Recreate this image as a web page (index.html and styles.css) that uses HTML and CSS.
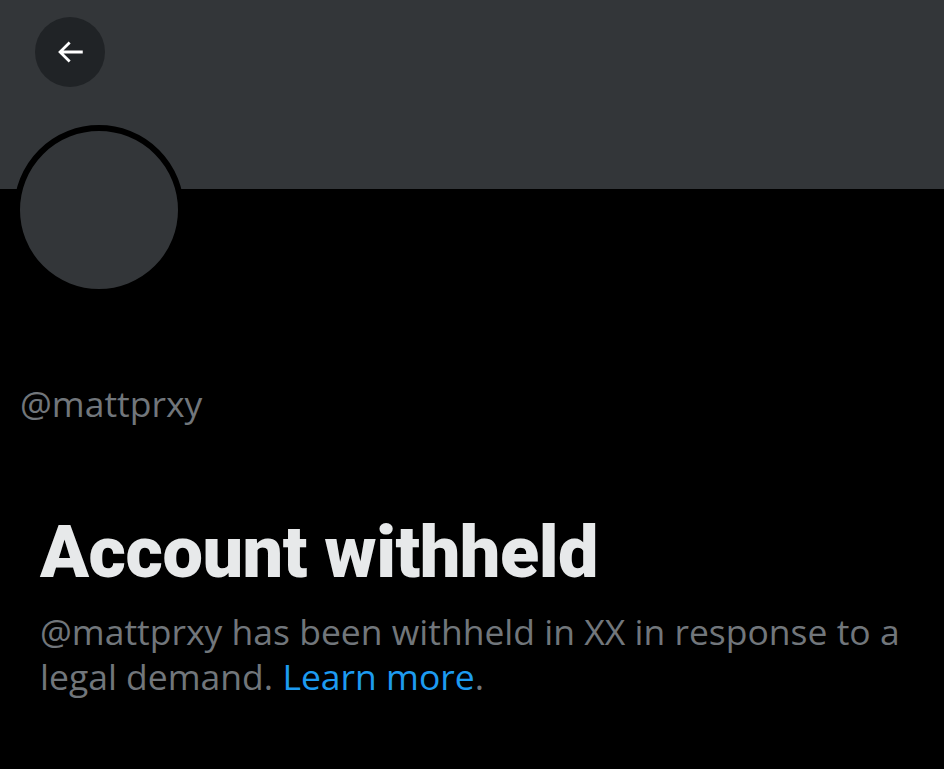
FILE: index.html
```html
<!DOCTYPE html>
<html>
<head>
<meta charset="utf-8">
<link rel="stylesheet" href="styles.css">
</head>
<body>
<div class="page">
  <div class="banner">
    <div class="back">
      <svg viewBox="0 0 24 24" width="34" height="34"><path fill="#fff" d="M7.414 13l5.043 5.04-1.414 1.42L3.586 12l7.457-7.46 1.414 1.42L7.414 11H21v2H7.414z"/></svg>
    </div>
  </div>
  <div class="avatar"></div>
  <div class="handle">@mattprxy</div>
  <div class="notice">
    <h1 class="title">Account withheld</h1>
    <p class="desc">@mattprxy has been withheld in XX in response to a legal demand. <span class="link">Learn more</span>.</p>
  </div>
</div>
</body>
</html>
```
FILE: styles.css
```css
html, body { margin: 0; padding: 0; background: #000; }
body { width: 944px; height: 769px; overflow: hidden; font-family: "Open Sans", Roboto, sans-serif; }
.page { display: flex; flex-direction: column; }
.banner { height: 189px; background: #333639; padding: 17px 0 0 35px; box-sizing: border-box; }
.back { width: 70px; height: 70px; border-radius: 50%; background: #202326; display: flex; align-items: center; justify-content: center; }
.avatar { width: 158px; height: 158px; border: 6px solid #000; border-radius: 50%; background: #333639; margin: -64px 0 0 14px; }
.handle { margin: 88px 0 0 20px; font-size: 35.5px; line-height: 40px; color: #71767b; }
.notice { padding: 88px 24px 0 40px; }
.title { margin: 0; font-family: Roboto, sans-serif; font-size: 72px; font-weight: 900; line-height: 84px; color: #e7e9ea; letter-spacing: -0.5px; }
.desc { margin: 14px 0 0; font-size: 35.5px; line-height: 45px; color: #71767b; }
.link { color: #1d9bf0; }
```
